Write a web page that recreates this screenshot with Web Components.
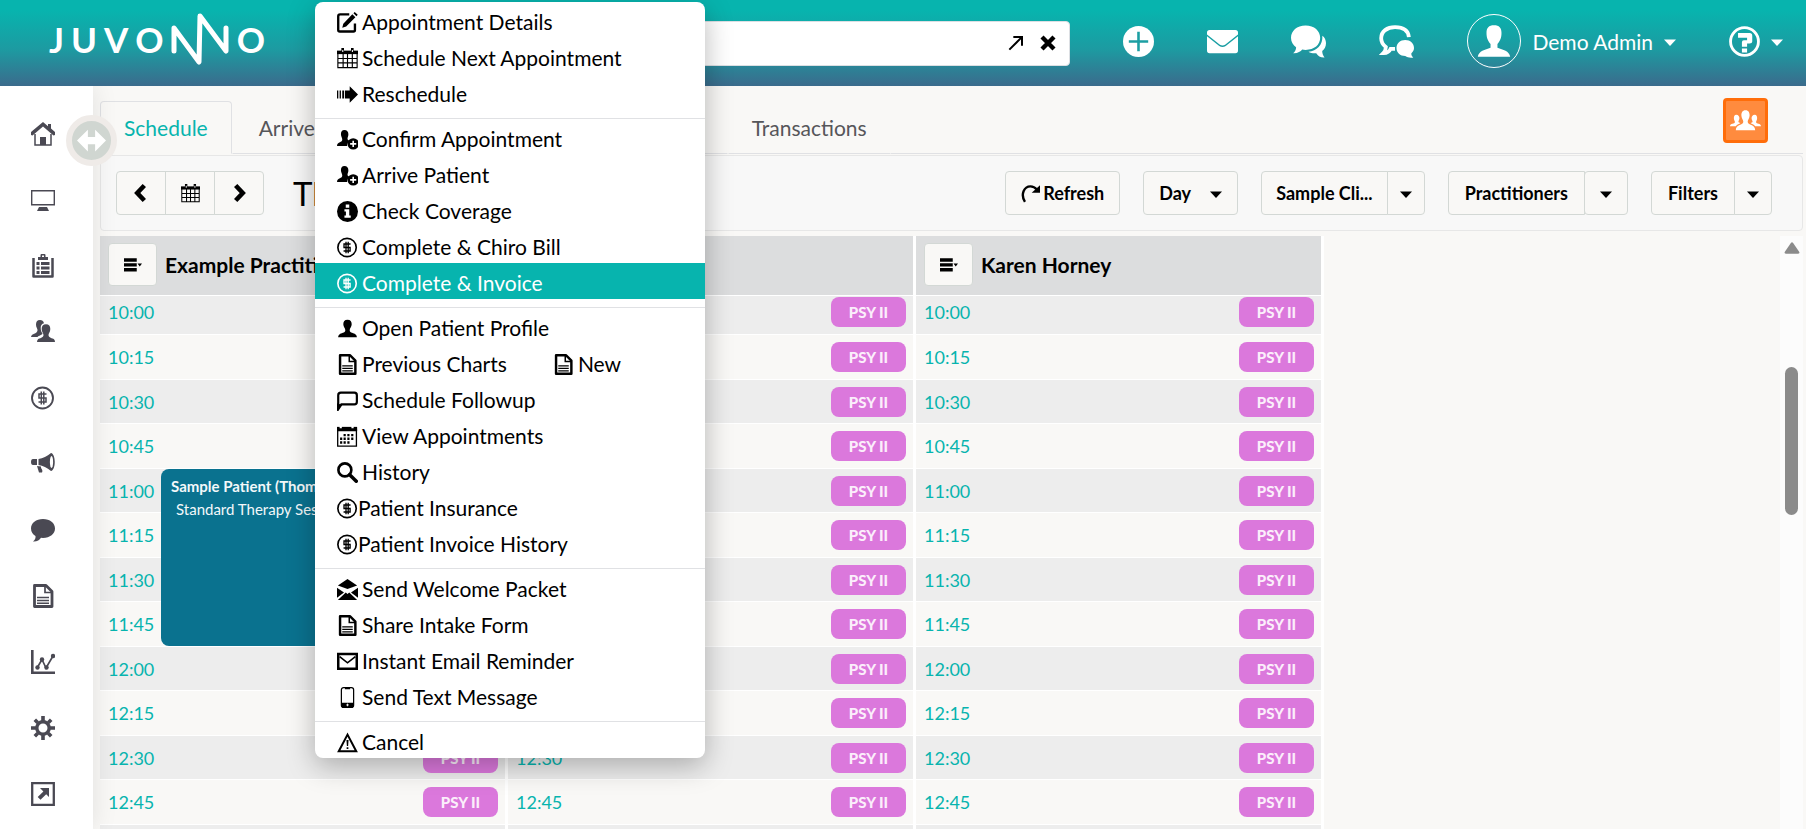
<!DOCTYPE html>
<html lang="en">
<head>
<meta charset="utf-8">
<title>Juvonno - Schedule</title>
<style>
    html, body {
        margin: 0;
        height: 100%;
    }
    body {
        --teal: #07b4ae;
        --line: #e0e1e4;
        --paper: #f9f8f6;
        --ink: #4a4953;
        font-family: Lato, "Open Sans", sans-serif;
        font-size: 18px;
        color: #000;
        background: var(--paper);
        overflow: hidden;
    }
</style>
</head>
<body>
<juv-app></juv-app>

<script>
// Icons are drawn on a 24x24 grid
const ICONS = {
    home: '<path d="M12 0 0 10v3l1.500.5L12 4.500l10.500 9 1.500-.5v-3l-4-3.400V2h-3v2.200z"/><path d="M4 12v11h16V12" fill="none" stroke="currentColor" stroke-width="1.500"/><path d="M9 15h6v8H9z"/>',
    monitor: '<path d="M.7 2.700h22.600v14H.7z" fill="none" stroke="currentColor" stroke-width="1.400"/><path d="M8 19h8l2 4H6z"/>',
    clipboard: '<path d="M2.500 4v18.500h19V4" fill="none" stroke="currentColor" stroke-width="2.500" stroke-linejoin="round"/><path d="M7 3h2.500V1q0-1 1-1h3q1 0 1 1v2H17v3H7zM5.500 8h3v3h-3zM10 8h8.500v3H10zM5.500 12.500h3v3h-3zM10 12.500h8.500v3H10zM5.500 17h3v3h-3zM10 17h8.500v3H10z"/><path d="M11 1.500h2V3h-2z" fill="#fff"/>',
    users: '<path d="M9 0c-3 0-4 2-4 4.500 0 3 1.500 4 1.500 5.500 0 3-3 3.500-5 4.500Q0 15.500 0 17h6.500c1-1.500 5-2 5-3.500-1-1-1.800-3-1.800-5.500C9.700 5 11 3.500 13 3.200 12.500 1 11 0 9 0z"/><path d="M15 4.300c-3 0-4.300 2-4.300 4.700 0 3 1.800 4.500 1.800 6 0 3-4 3-5.500 4.300Q6 20.500 6 22h18q0-1.500-1-2.700c-1.500-1.300-5.500-1.300-5.500-4.300 0-1.500 1.800-3 1.800-6 0-2.700-1.300-4.700-4.300-4.700z"/>',
    dollar: '<circle cx="11.500" cy="12" r="10.500" fill="none" stroke="currentColor" stroke-width="1.900"/><path d="M15.500 8H8v4h7v4H7.500M10.300 5.500v13M12.800 5.500v13" fill="none" stroke="currentColor" stroke-width="1.500"/>',
    horn: '<path d="M6 7H2Q0 7 0 10t2 3h4zM7.500 7C12 6.500 16 4 20 1c5 1 5 17 0 18-4-3-8-5.500-12.500-6z"/><ellipse cx="20.500" cy="10" rx="1.600" ry="6" fill="#fff"/><path d="m6 14 4 .5c-.5 2.500 2.500 3 1 6H8z"/>',
    chat: '<path d="M12 1C5 1 0 5 0 10.500c0 3.500 2 6 4.500 7.600.3 2-.5 3.900-2.500 5.400 4 .3 6.500-1.500 8-3.800l2 .2c7 0 12-4 12-9.400S19 1 12 1z"/>',
    doc: '<path d="M3.500 1.500h11.500l6 6v15h-17.500z" fill="none" stroke="currentColor" stroke-width="2.800" stroke-linejoin="round"/><path d="M14 1.500V8.500h7" fill="none" stroke="currentColor" stroke-width="1.700"/><path d="M6 13.500h12M6 16.500h12M6 19.300h12" stroke="currentColor" stroke-width="1.400"/>',
    chart: '<path d="M1.300 0v22.700H24" fill="none" stroke="currentColor" stroke-width="2.600"/><path d="m6 18 5-8.500 4 8.500 7-12" fill="none" stroke="currentColor" stroke-width="1.700"/><circle cx="6.500" cy="17.500" r="2.200"/><circle cx="11" cy="9.500" r="2.200"/><circle cx="15.500" cy="17.500" r="2.200"/><circle cx="22" cy="6" r="2.200"/>',
    gear: '<circle cx="12" cy="12" r="6.200" fill="none" stroke="currentColor" stroke-width="3.400"/><g stroke="currentColor" stroke-width="3.600"><path d="M12 0v5M12 19v5M0 12h5M19 12h5M3.800 3.800l3 3M17.200 17.200l3 3M3.800 20.200l3-3M17.200 6.800l3-3"/></g>',
    external: '<path d="M1.200 1.200h21.600v21.600H1.200z" fill="none" stroke="currentColor" stroke-width="2.300"/><path d="M9 6h9v9l-2.800-2.800-5.700 5.600-2.800-2.800 5.700-5.600z"/>',
    arrows: '<path d="m0 12 9-9v6h6V3l9 9-9 9v-6H9v6z"/>',
    edit: '<path d="M14 2.700H3.500Q1.400 2.700 1.400 5v15.500q0 1.800 1.800 1.800h15.600q1.700 0 1.700-1.700V13" fill="none" stroke="currentColor" stroke-width="2.700"/><path d="M17.500 2.500 21 6 10.500 16.500 6 18l1.200-4.700zM18.800 1.300 20.200 0l3.500 3.200-1.500 1.600z"/>',
    calendar: '<path d="M0 3h24v4H0z"/><path d="M1 5v17.500h22V5M7 6v16M12 6v16M17.500 6v16M1 12h22M1 17h22" fill="none" stroke="currentColor" stroke-width="1.300"/><path d="M5 0h3v5H5zM16 0h3v5h-3z"/><path d="M6 2.200h1.200v2.500H6zM17 2.200h1.200v2.500H17z" fill="#fff"/>',
    calgrid: '<path d="M0 1h23v5H0z"/><path d="M.8 3v20h21.400V3" fill="none" stroke="currentColor" stroke-width="1.500"/><path d="M7.500 9H10v2.800H7.500zM11.800 9h2.500v2.800h-2.500zM16.200 9h2.500v2.800h-2.500zM3.500 13.200H6V16H3.500zM7.500 13.200H10V16H7.500zM11.800 13.200h2.500V16h-2.500zM16.200 13.200h2.500V16h-2.500zM3.500 17.500H6v2.800H3.500zM7.500 17.500H10v2.800H7.500zM11.800 17.500h2.500v2.800h-2.500z"/><path d="M3 0h2.500v2.500H3zM16.500 0H19v2.500h-2.500z" fill="#fff"/>',
    forward: '<path d="M0 7.500h1.500v9H0zM3 7.500h1.500v9H3zM6 7.500h2v9H6zM9 7.500h5.500v-5L24 12l-9.500 9.500v-5H9z"/>',
    useradd: '<path d="M8.500 1C5.500 1 4.500 3 4.500 6c0 3 1.500 3.500 1.500 6 0 2.800-3 2.800-5 4.500Q0 17.500 0 19.500h11.500c0-3 1.500-5 3.500-6.200-2-.3-3-1-3-2.300 0-1.500 1-2.500 1-5 0-3-1.500-5-4.500-5z"/><circle cx="18.500" cy="17" r="6.500"/><path d="M18.500 13.500v7M15 17h7" stroke="#fff" stroke-width="1.800"/>',
    info: '<circle cx="12" cy="12" r="12"/><path d="M10 4h4v3.800h-4zM8.500 9.500H14v7h1.700V19H8.500v-2.500h1.700V12H8.500z" fill="#fff"/>',
    user: '<path d="M12 2C8.500 2 7.200 4.200 7.200 7c0 3 2.300 4.500 2.300 7 0 3.300-5 2.800-7 5Q1.300 20 1.300 22h21.400q0-2-1.200-3c-2-2.200-7-1.700-7-5 0-2.500 2.300-4 2.300-7 0-2.800-1.300-5-4.800-5z"/>',
    avatar: '<path d="M12 1.500c-3.500 0-5 1.700-5 5 0 3.700 1 5.500 2.700 7.500v2.500C6 18 1.800 18.500 1.200 22.500h21.600c-.6-4-4.800-4.500-8.500-6V14C16 12 17 10.200 17 6.500c0-3.300-1.500-5-5-5z"/>',
    bubble: '<path d="M1.400 22V6Q1.400 3 4.400 3h15.500q2.800 0 2.800 3v7.500q0 3-2.800 3H5z" fill="none" stroke="currentColor" stroke-width="2.500"/><path d="M0 24v-9l6 2z"/>',
    search: '<circle cx="9" cy="9" r="7.400" fill="none" stroke="currentColor" stroke-width="3"/><path d="m14.500 14.500 7.500 7.500" stroke="currentColor" stroke-width="4" stroke-linecap="round"/>',
    mailopen: '<path d="M12 0 1 7.500l11 4 11-4zM0 10l8 5.500-8 6zM24 10v11.500l-8-6zM1 24l9-8.500L12 17l2-1.500 9 8.500z"/>',
    mail: '<path d="M1.400 3.400h21.200v17H1.400z" fill="none" stroke="currentColor" stroke-width="2.900"/><path d="m3 6.500 9 7 9-7" fill="none" stroke="currentColor" stroke-width="1.900"/>',
    phone: '<rect x="5" y=".7" width="14" height="22.600" rx="2.500" fill="none" stroke="currentColor" stroke-width="1.400"/><path d="M5 18h14v4l-1.500 1.500h-11L5 22zM9 1h6v1.500H9z"/><path d="M12 19v3M10.500 20.500h3" stroke="#fff"/>',
    warning: '<path d="M12 3 2 22h20z" fill="none" stroke="currentColor" stroke-width="2.300"/><path d="M10.800 9h2.400l-.5 7h-1.400zM11 17.500h2v2h-2z"/>',
    prev: '<path d="m16 3-8.500 9 8.500 9" fill="none" stroke="currentColor" stroke-width="5.500"/>',
    next: '<path d="m8 3 8.500 9L8 21" fill="none" stroke="currentColor" stroke-width="5.500"/>',
    refresh: '<path d="M5 22.500C-1 13 4 3 12 3c3 0 5.500 1 8 4" fill="none" stroke="currentColor" stroke-width="3"/><path d="M24 1.500v9.500H13.500z"/>',
    caret: '<path d="M0 9h24L12 22z"/>',
    bars: '<path d="M0 3h17v4.500H0zM0 9.500h17V14H0zM0 16h17v4.500H0zM18 10h6l-3 4z"/>',
    popout: '<path d="M2 22 20 4M8 3h13v13" fill="none" stroke="currentColor" stroke-width="3"/>',
    close: '<path d="m3 3 18 18M21 3 3 21" stroke="currentColor" stroke-width="6.500"/>',
    plus: '<circle cx="12" cy="12" r="12"/><path d="M12 4.500v15M4.500 12h15" stroke="#1c9fa3" stroke-width="2"/>',
    envelope: '<path d="M0 5q0-2 2-2h20q2 0 2 2v1.500l-10 8q-2 1.200-4 0L0 6.500zM0 8l9.500 7.500q2.500 1.500 5 0L24 8v11q0 2-2 2H2q-2 0-2-2z"/>',
    chats: '<path d="M10 1C4 1 0 4.700 0 9.500c0 3 1.500 5 3.500 6.500 0 1.700-.7 3-2 4 3 .2 5-1 6.200-2.500L10 17.800c6 0 10-3.500 10-8.300S16 1 10 1z"/><path d="M21.500 8c1.500 1 2.500 3 2.500 5 0 2.500-1 4.200-2.600 5.500 0 1.800.6 3.200 1.600 4.500-2.500.2-4.500-1-5.700-3-2 .2-4-.2-5.300-1 5.500-.7 10-4.500 9.500-11z"/>',
    chatpair: '<path d="M20.500 9C20 4.500 16.500 2.200 11 2.200 5.500 2.200 1.500 5 1.500 9.800c0 3 1.500 4.700 3.200 6-.1 2-.8 3.300-1.700 4.200 3 .1 4.300-1.500 5-3h3" fill="none" stroke="currentColor" stroke-width="2.600"/><path d="M18 11c-3.500 0-6 2.300-6 5.500s2.500 5.500 6 5.500c1.500 1 3.500 1.500 5.500 1-1-1-1.500-2-1.300-3 1.200-1 1.800-2 1.800-3.500 0-3.200-2.500-5.500-6-5.500z"/>',
    help: '<circle cx="12" cy="12" r="10.800" fill="none" stroke="currentColor" stroke-width="2.200"/><path d="M7 5.500h9q2 0 2 2V12q0 1.500-2 1.500h-2V16h-4v-3.500q0-1.500 1.500-1.500H14V9H7zM10 17.500h4v3h-4z"/>',
    team: '<path d="M12 4C9.500 4 8.800 6 8.800 8c0 2.500 1.500 3.500 1.500 5 0 3-5.800 1.800-5.800 6.500h15c0-4.700-5.800-3.500-5.800-6.500 0-1.500 1.500-2.500 1.500-5 0-2-.7-4-3.200-4zM4.800 7.500C3.300 7.500 3 9 3 10.200c0 1.500.8 2 .8 3C3.800 15 0 14 0 16.500h4.500c1-1.500 2.800-1.500 3.500-2.500-.5-.3-1.500-.3-1.500-1 0-1 .8-1.500.8-2.800 0-1.200-.7-2.700-2.500-2.700zM19.200 7.500c1.500 0 1.800 1.500 1.800 2.700 0 1.500-.8 2-.8 3 0 1.800 3.800.8 3.800 3.300h-4.500c-1-1.500-2.800-1.500-3.500-2.500.5-.3 1.500-.3 1.500-1 0-1-.8-1.500-.8-2.800 0-1.200.7-2.700 2.500-2.700z"/>',
    up: '<path d="M10.300 4.500q1.700-2 3.400 0l9 13q1.500 3-2 3H3.300q-3.500 0-2-3z"/>'
};

// Shared base: puts the markup into an open shadow root
class JuvElement extends HTMLElement {
    constructor() {
        super();
        this.attachShadow({ mode: 'open' });
    }

    connectedCallback() {
        this.shadowRoot.innerHTML = this.template();
    }
}

class JuvIcon extends JuvElement {
    template() {
        const size = this.getAttribute('size') || 24;
        return `
            <style>
                :host { display: inline-flex; flex: none; }
                svg { display: block; fill: currentColor; }
            </style>
            <svg width="${size}" height="${size}" viewBox="0 0 24 24" aria-hidden="true">${ICONS[this.getAttribute('name')]}</svg>
        `;
    }
}

class JuvHeader extends JuvElement {
    template() {
        return `
            <style>
                :host {
                    display: flex;
                    align-items: center;
                    gap: 53px;
                    height: 86px;
                    padding-right: 23px;
                    box-sizing: border-box;
                    color: #fff;
                    background: linear-gradient(#07b4ae 12%, #1d9aa1 58%, #3b6b8c);
                }
                .logo {
                    display: flex;
                    align-items: center;
                    gap: 7px;
                    width: 220px;
                    padding: 0 0 8px 49px;
                    font-size: 35px;
                    line-height: 48px;
                    font-weight: 700;
                    color: #fff;
                    text-decoration: none;
                }
                .logo svg { display: block; }
                .search {
                    display: flex;
                    align-items: center;
                    flex: 1;
                    height: 43px;
                    margin-left: 20px;
                    padding-right: 5px;
                    background: #fff;
                    border: 1px solid #dcdfe3;
                    border-radius: 4px;
                }
                .search input {
                    flex: 1;
                    min-width: 0;
                    height: 36px;
                    border: 0;
                    outline: 0;
                    font: inherit;
                    background: none;
                }
                button {
                    display: flex;
                    align-items: center;
                    gap: 11px;
                    padding: 0;
                    border: 0;
                    background: none;
                    color: inherit;
                    font: inherit;
                    font-size: 21px;
                    cursor: pointer;
                }
                .search button {
                    width: 32px;
                    justify-content: center;
                    color: #000;
                }
                nav {
                    display: flex;
                    align-items: center;
                    gap: 53px;
                    padding-bottom: 4px;
                }
                .avatar {
                    display: flex;
                    align-items: center;
                    justify-content: center;
                    width: 52px;
                    height: 52px;
                    border: 1px solid #fff;
                    border-radius: 50%;
                }
            </style>
            <a class="logo" href="#" aria-label="Juvonno">
                <span>J</span><span>U</span><span>V</span><span>O</span>
                <svg width="59" height="52" viewBox="0 0 59 52" fill="none" stroke="currentColor" stroke-width="5" stroke-linecap="round" stroke-linejoin="round"><path d="M3 38V15l25 34 1-46 26 35V15"/></svg>
                <span>O</span>
            </a>
            <div class="search">
                <input type="text" aria-label="Search">
                <button aria-label="Open search"><juv-icon name="popout" size="16"></juv-icon></button>
                <button aria-label="Clear search"><juv-icon name="close" size="16"></juv-icon></button>
            </div>
            <nav>
                <button aria-label="Add"><juv-icon name="plus" size="31"></juv-icon></button>
                <button aria-label="Mail"><juv-icon name="envelope" size="31"></juv-icon></button>
                <button aria-label="Messages"><juv-icon name="chats" size="35"></juv-icon></button>
                <button aria-label="Team chat"><juv-icon name="chatpair" size="35"></juv-icon></button>
                <button>
                    <span class="avatar"><juv-icon name="avatar" size="36"></juv-icon></span>
                    <slot></slot>
                    <juv-icon name="caret" size="12"></juv-icon>
                </button>
                <button aria-label="Help"><juv-icon name="help" size="31"></juv-icon><juv-icon name="caret" size="12"></juv-icon></button>
            </nav>
        `;
    }
}

class JuvSidebar extends JuvElement {
    template() {
        const items = [
            ['home', 'Home'], ['monitor', 'Display'], ['clipboard', 'Tasks'], ['users', 'Patients'],
            ['dollar', 'Billing'], ['horn', 'Marketing'], ['chat', 'Messages'], ['doc', 'Documents'],
            ['chart', 'Reports'], ['gear', 'Settings'], ['external', 'Links']
        ];
        return `
            <style>
                :host {
                    display: block;
                    position: relative;
                    padding-top: 15px;
                    background: #fff;
                    color: var(--ink);
                    box-shadow: 0 0 24px rgba(0, 0, 0, 0.1);
                    z-index: 1;
                    clip-path: inset(0 -40px 0 0);
                }
                a {
                    display: flex;
                    align-items: center;
                    height: 66px;
                    padding-left: 31px;
                    color: inherit;
                }
                /* round handle that sits over the edge of the bar */
                .toggle {
                    position: absolute;
                    top: 29px;
                    right: -24px;
                    display: flex;
                    align-items: center;
                    justify-content: center;
                    width: 51px;
                    height: 51px;
                    padding: 0;
                    border: 6px solid #efebe8;
                    border-radius: 50%;
                    background: #d0d6d1;
                    color: #fff;
                    cursor: pointer;
                }
            </style>
            ${items.map(([icon, label]) => `<a href="#" aria-label="${label}"><juv-icon name="${icon}"></juv-icon></a>`).join('')}
            <button class="toggle" aria-label="Toggle sidebar"><juv-icon name="arrows" size="29"></juv-icon></button>
        `;
    }
}

class JuvTabs extends JuvElement {
    template() {
        return `
            <style>
                :host {
                    display: flex;
                    align-items: flex-end;
                    height: 56px;
                    margin-bottom: 1px;
                }
                a {
                    box-sizing: border-box;
                    height: 53px;
                    padding: 0 23px;
                    border: 1px solid transparent;
                    border-bottom-color: var(--line);
                    font-size: 21px;
                    line-height: 52px;
                    color: #56565a;
                    text-decoration: none;
                }
                a.active {
                    border-color: var(--line);
                    border-bottom-color: transparent;
                    border-radius: 4px 4px 0 0;
                    color: var(--teal);
                }
                a.wide { min-width: 496px; padding-left: 26px; }
                .end {
                    display: flex;
                    flex: 1;
                    justify-content: flex-end;
                    height: 55px;
                    padding-right: 35px;
                    border-bottom: 1px solid var(--line);
                }
                button {
                    display: flex;
                    align-items: center;
                    justify-content: center;
                    width: 45px;
                    height: 45px;
                    padding: 0;
                    border: 3px solid #ff6d0a;
                    border-radius: 4px;
                    background: #ff8b3e;
                    color: #fff;
                }
            </style>
            <a class="active" href="#">Schedule</a>
            <a class="wide" href="#">Arrived</a>
            <a href="#">Transactions</a>
            <div class="end"><button aria-label="Team"><juv-icon name="team" size="31"></juv-icon></button></div>
        `;
    }
}

class JuvToolbar extends JuvElement {
    template() {
        return `
            <style>
                :host {
                    display: flex;
                    align-items: center;
                    gap: 23px;
                    height: 76px;
                    padding: 0 30px 0 15px;
                    box-sizing: border-box;
                    border: 1px solid #e7e7e7;
                    border-radius: 4px;
                    background: #f8f8f8;
                }
                .group { display: flex; }
                button, select {
                    box-sizing: border-box;
                    height: 44px;
                    border: 1px solid #d3d8d5;
                    background: #f9f8f6;
                    color: #000;
                    font: inherit;
                    font-weight: 700;
                    border-radius: 4px;
                    cursor: pointer;
                }
                button {
                    display: flex;
                    align-items: center;
                    justify-content: center;
                    gap: 3px;
                    padding: 0 15px;
                }
                .group button:not(:first-child) { border-top-left-radius: 0; border-bottom-left-radius: 0; margin-left: -1px; }
                .group button:not(:last-child) { border-top-right-radius: 0; border-bottom-right-radius: 0; }
                .nav button { width: 50px; padding: 0; }
                .split button:first-child { padding: 0 16px; }
                .split button:last-child { width: 38px; padding: 0; }
                .split.clinic button:first-child { padding: 0 14px; }
                .split.wide button:last-child { width: 44px; border-radius: 4px; }
                h1 {
                    flex: 1;
                    margin: 0 0 0 6px;
                    font-size: 33px;
                    line-height: 40px;
                    font-weight: 400;
                }
                .select { display: grid; align-items: center; width: 95px; }
                .select > * { grid-area: 1 / 1; }
                select { width: 100%; padding: 0 15px; appearance: none; }
                .select juv-icon { justify-self: end; margin-right: 16px; pointer-events: none; }
            </style>
            <div class="group nav">
                <button aria-label="Previous"><juv-icon name="prev" size="20"></juv-icon></button>
                <button aria-label="Pick a date"><juv-icon name="calendar" size="19"></juv-icon></button>
                <button aria-label="Next"><juv-icon name="next" size="20"></juv-icon></button>
            </div>
            <h1>Thursday</h1>
            <button class="refresh"><juv-icon name="refresh" size="19"></juv-icon>Refresh</button>
            <div class="select">
                <select aria-label="View"><option>Day</option><option>Week</option></select>
                <juv-icon name="caret" size="12"></juv-icon>
            </div>
            <div class="group split clinic">
                <button>Sample Cli...</button>
                <button aria-label="Choose clinic"><juv-icon name="caret" size="12"></juv-icon></button>
            </div>
            <div class="group split wide">
                <button>Practitioners</button>
                <button aria-label="Choose practitioners"><juv-icon name="caret" size="12"></juv-icon></button>
            </div>
            <div class="group split">
                <button>Filters</button>
                <button aria-label="Choose filters"><juv-icon name="caret" size="12"></juv-icon></button>
            </div>
        `;
    }
}

class JuvColumn extends JuvElement {
    template() {
        const times = ['10:00', '10:15', '10:30', '10:45', '11:00', '11:15', '11:30', '11:45', '12:00', '12:15', '12:30', '12:45'];
        return `
            <style>
                :host {
                    display: block;
                    position: relative;
                    border-right: 3px solid #fff;
                }
                header {
                    display: flex;
                    align-items: center;
                    gap: 8px;
                    height: 59px;
                    padding: 0 8px 2px;
                    box-sizing: border-box;
                    background: #dcddde;
                }
                header button {
                    display: flex;
                    align-items: center;
                    justify-content: center;
                    width: 49px;
                    height: 43px;
                    padding: 0;
                    border: 1px solid #d3d8d5;
                    border-radius: 4px;
                    background: var(--paper);
                    color: #000;
                }
                h2 {
                    margin: 0;
                    font-size: 21px;
                    line-height: 24px;
                    font-weight: 700;
                    white-space: nowrap;
                }
                .row {
                    display: flex;
                    align-items: center;
                    justify-content: space-between;
                    height: 45px;
                    padding: 0 7px 0 8px;
                    box-sizing: border-box;
                    border-top: 1px solid #fff;
                    background: var(--paper);
                    color: var(--teal);
                }
                .row:nth-of-type(odd) { height: 44px; background: #ededed; }
                /* the first slot is partly scrolled under the heading */
                .row:first-of-type { height: 39px; padding-bottom: 6px; }
                .badge {
                    width: 75px;
                    border-radius: 8px;
                    background: #db78dc;
                    color: #fbeefb;
                    font-size: 15px;
                    line-height: 30px;
                    font-weight: 900;
                    text-align: center;
                }
            </style>
            <header>
                <button aria-label="Column menu"><juv-icon name="bars" size="18"></juv-icon></button>
                <h2>${this.getAttribute('heading') || ''}</h2>
            </header>
            ${times.map(t => `<div class="row"><time>${t}</time><span class="badge">PSY II</span></div>`).join('')}
            <div class="row"></div>
            <slot></slot>
        `;
    }
}

class JuvEvent extends JuvElement {
    template() {
        return `
            <style>
                :host {
                    position: absolute;
                    left: 61px;
                    right: 8px;
                    top: 233px;
                    height: 177px;
                    padding: 6px 10px;
                    box-sizing: border-box;
                    border-radius: 8px;
                    overflow: hidden;
                    background: #0a728f;
                    color: #f3f8fa;
                    font-size: 15px;
                    line-height: 23px;
                    white-space: nowrap;
                }
                strong, span { display: block; }
                span { padding-left: 5px; }
            </style>
            <strong><slot name="patient"></slot></strong>
            <span><slot></slot></span>
        `;
    }
}

class JuvCalendar extends JuvElement {
    template() {
        return `
            <style>
                :host {
                    display: flex;
                    justify-content: space-between;
                    margin-top: 5px;
                    min-height: 0;
                    overflow: hidden;
                }
                .columns {
                    display: grid;
                    grid-template-columns: repeat(3, 1fr);
                    flex: 0 1 1224px;
                    overflow: hidden;
                }
                .scroll {
                    display: flex;
                    flex-direction: column;
                    align-items: center;
                    width: 23px;
                    padding-top: 4px;
                    box-sizing: border-box;
                    background: #fcfcfc;
                    color: #8b8b8b;
                }
                .thumb {
                    width: 13px;
                    height: 148px;
                    margin-top: 111px;
                    border-radius: 7px;
                    background: currentColor;
                }
            </style>
            <div class="columns">
                <juv-column heading="Example Practitioner">
                    <juv-event><span slot="patient">Sample Patient (Thomas)</span>Standard Therapy Session</juv-event>
                </juv-column>
                <juv-column></juv-column>
                <juv-column heading="Karen Horney"></juv-column>
            </div>
            <div class="scroll"><juv-icon name="up" size="16"></juv-icon><div class="thumb"></div></div>
        `;
    }
}

class JuvMenuItem extends JuvElement {
    template() {
        return `
            <style>
                :host { display: block; }
                button {
                    display: flex;
                    align-items: center;
                    gap: 4px;
                    width: 100%;
                    height: 36px;
                    padding: 4px 0 0 22px;
                    border: 0;
                    background: none;
                    color: #000;
                    font: inherit;
                    text-align: left;
                    white-space: nowrap;
                    cursor: pointer;
                }
                :host([tight]) button { gap: 0; }
                :host([active]) button { background: var(--teal); color: #fff; }
            </style>
            <button role="menuitem"><juv-icon name="${this.getAttribute('icon')}" size="21"></juv-icon><slot></slot></button>
        `;
    }
}

class JuvMenu extends JuvElement {
    template() {
        return `
            <style>
                :host {
                    display: block;
                    width: 390px;
                    border-radius: 8px;
                    background: #fff;
                    box-shadow: 0 8px 28px rgba(0, 0, 0, 0.28);
                    font-size: 21px;
                    line-height: 32px;
                }
                ::slotted(hr) {
                    margin: 8px 0 0;
                    border: 0;
                    border-top: 1px solid var(--line);
                }
                ::slotted(div) { display: flex; gap: 24px; }
            </style>
            <slot></slot>
        `;
    }
}

class JuvApp extends JuvElement {
    template() {
        return `
            <style>
                :host {
                    display: grid;
                    grid-template: auto 1fr / 93px 1fr;
                    height: 100vh;
                    position: relative;
                    overflow: hidden;
                }
                juv-header { grid-column: 1 / -1; }
                main {
                    display: flex;
                    flex-direction: column;
                    min-width: 0;
                    min-height: 0;
                    padding: 12px 3px 0 7px;
                    box-sizing: border-box;
                }
                juv-tabs, juv-toolbar { flex: none; }
                juv-calendar { flex: 1; }
                juv-menu {
                    position: absolute;
                    left: 315px;
                    top: 2px;
                    z-index: 10;
                }
            </style>
            <juv-header>Demo Admin</juv-header>
            <juv-sidebar></juv-sidebar>
            <main>
                <juv-tabs></juv-tabs>
                <juv-toolbar></juv-toolbar>
                <juv-calendar></juv-calendar>
            </main>
            <juv-menu role="menu">
                <juv-menu-item icon="edit">Appointment Details</juv-menu-item>
                <juv-menu-item icon="calendar">Schedule Next Appointment</juv-menu-item>
                <juv-menu-item icon="forward">Reschedule</juv-menu-item>
                <hr>
                <juv-menu-item icon="useradd">Confirm Appointment</juv-menu-item>
                <juv-menu-item icon="useradd">Arrive Patient</juv-menu-item>
                <juv-menu-item icon="info">Check Coverage</juv-menu-item>
                <juv-menu-item icon="dollar">Complete &amp; Chiro Bill</juv-menu-item>
                <juv-menu-item icon="dollar" active>Complete &amp; Invoice</juv-menu-item>
                <hr>
                <juv-menu-item icon="user">Open Patient Profile</juv-menu-item>
                <div>
                    <juv-menu-item icon="doc">Previous Charts</juv-menu-item>
                    <juv-menu-item icon="doc">New</juv-menu-item>
                </div>
                <juv-menu-item icon="bubble">Schedule Followup</juv-menu-item>
                <juv-menu-item icon="calgrid">View Appointments</juv-menu-item>
                <juv-menu-item icon="search">History</juv-menu-item>
                <juv-menu-item icon="dollar" tight>Patient Insurance</juv-menu-item>
                <juv-menu-item icon="dollar" tight>Patient Invoice History</juv-menu-item>
                <hr>
                <juv-menu-item icon="mailopen">Send Welcome Packet</juv-menu-item>
                <juv-menu-item icon="doc">Share Intake Form</juv-menu-item>
                <juv-menu-item icon="mail">Instant Email Reminder</juv-menu-item>
                <juv-menu-item icon="phone">Send Text Message</juv-menu-item>
                <hr>
                <juv-menu-item icon="warning">Cancel</juv-menu-item>
            </juv-menu>
        `;
    }
}

customElements.define('juv-icon', JuvIcon);
customElements.define('juv-header', JuvHeader);
customElements.define('juv-sidebar', JuvSidebar);
customElements.define('juv-tabs', JuvTabs);
customElements.define('juv-toolbar', JuvToolbar);
customElements.define('juv-event', JuvEvent);
customElements.define('juv-column', JuvColumn);
customElements.define('juv-calendar', JuvCalendar);
customElements.define('juv-menu-item', JuvMenuItem);
customElements.define('juv-menu', JuvMenu);
customElements.define('juv-app', JuvApp);
</script>
</body>
</html>
